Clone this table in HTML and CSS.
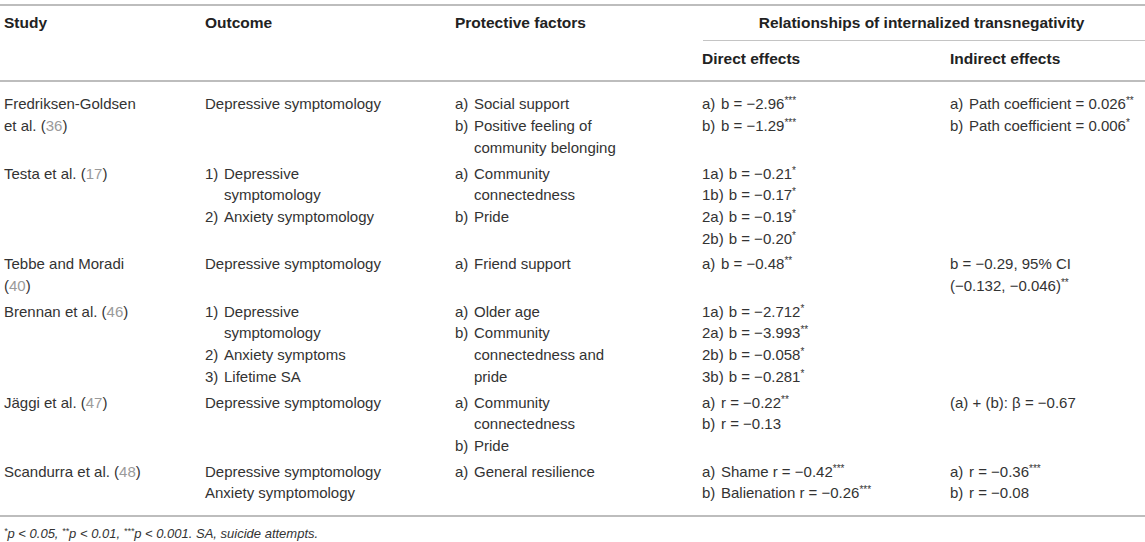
FILE: index.html
```html
<!DOCTYPE html>
<html lang="en">
<head>
<meta charset="utf-8">
<title>Internalized transnegativity and protective factors</title>
<link rel="stylesheet" href="styles.css">
</head>
<body>
<table class="tbl">
  <colgroup>
    <col class="c1"><col class="c2"><col class="c3"><col class="c4"><col class="c5">
  </colgroup>
  <thead>
    <tr class="h1">
      <th rowspan="2" class="tall">Study</th>
      <th rowspan="2" class="tall">Outcome</th>
      <th rowspan="2" class="tall">Protective factors</th>
      <th colspan="2" class="group"><div class="group-title">Relationships of internalized transnegativity</div></th>
    </tr>
    <tr class="h2">
      <th>Direct effects</th>
      <th>Indirect effects</th>
    </tr>
  </thead>
  <tbody>
    <tr class="first">
      <td class="k1">Fredriksen-Goldsen et al. (<span class="ref">36</span>)</td>
      <td class="k2">Depressive symptomology</td>
      <td class="k3">
        <div class="li"><span class="lb">a)</span><span>Social support</span></div>
        <div class="li"><span class="lb">b)</span><span>Positive feeling of community belonging</span></div>
      </td>
      <td class="k4">
        <div class="li"><span class="lb">a)</span><span>b = −2.96<sup>***</sup></span></div>
        <div class="li"><span class="lb">b)</span><span>b = −1.29<sup>***</sup></span></div>
      </td>
      <td class="k5">
        <div class="li"><span class="lb">a)</span><span>Path coefficient = 0.026<sup>**</sup></span></div>
        <div class="li"><span class="lb">b)</span><span>Path coefficient = 0.006<sup>*</sup></span></div>
      </td>
    </tr>
    <tr>
      <td class="k1">Testa et al. (<span class="ref">17</span>)</td>
      <td class="k2">
        <div class="li"><span class="lb">1)</span><span>Depressive symptomology</span></div>
        <div class="li"><span class="lb">2)</span><span>Anxiety symptomology</span></div>
      </td>
      <td class="k3">
        <div class="li"><span class="lb">a)</span><span>Community connectedness</span></div>
        <div class="li"><span class="lb">b)</span><span>Pride</span></div>
      </td>
      <td class="k4">
        <div class="li"><span class="lb">1a)</span><span>b = −0.21<sup>*</sup></span></div>
        <div class="li"><span class="lb">1b)</span><span>b = −0.17<sup>*</sup></span></div>
        <div class="li"><span class="lb">2a)</span><span>b = −0.19<sup>*</sup></span></div>
        <div class="li"><span class="lb">2b)</span><span>b = −0.20<sup>*</sup></span></div>
      </td>
      <td class="k5"></td>
    </tr>
    <tr>
      <td class="k1">Tebbe and Moradi (<span class="ref">40</span>)</td>
      <td class="k2">Depressive symptomology</td>
      <td class="k3">
        <div class="li"><span class="lb">a)</span><span>Friend support</span></div>
      </td>
      <td class="k4">
        <div class="li"><span class="lb">a)</span><span>b = −0.48<sup>**</sup></span></div>
      </td>
      <td class="k5">b = −0.29, 95% CI <span class="nw">(−0.132, −0.046)<sup>**</sup></span></td>
    </tr>
    <tr>
      <td class="k1">Brennan et al. (<span class="ref">46</span>)</td>
      <td class="k2">
        <div class="li"><span class="lb">1)</span><span>Depressive symptomology</span></div>
        <div class="li"><span class="lb">2)</span><span>Anxiety symptoms</span></div>
        <div class="li"><span class="lb">3)</span><span>Lifetime SA</span></div>
      </td>
      <td class="k3">
        <div class="li"><span class="lb">a)</span><span>Older age</span></div>
        <div class="li"><span class="lb">b)</span><span>Community connectedness and pride</span></div>
      </td>
      <td class="k4">
        <div class="li"><span class="lb">1a)</span><span>b = −2.712<sup>*</sup></span></div>
        <div class="li"><span class="lb">2a)</span><span>b = −3.993<sup>**</sup></span></div>
        <div class="li"><span class="lb">2b)</span><span>b = −0.058<sup>*</sup></span></div>
        <div class="li"><span class="lb">3b)</span><span>b = −0.281<sup>*</sup></span></div>
      </td>
      <td class="k5"></td>
    </tr>
    <tr>
      <td class="k1">Jäggi et al. (<span class="ref">47</span>)</td>
      <td class="k2">Depressive symptomology</td>
      <td class="k3">
        <div class="li"><span class="lb">a)</span><span>Community connectedness</span></div>
        <div class="li"><span class="lb">b)</span><span>Pride</span></div>
      </td>
      <td class="k4">
        <div class="li"><span class="lb">a)</span><span>r = −0.22<sup>**</sup></span></div>
        <div class="li"><span class="lb">b)</span><span>r = −0.13</span></div>
      </td>
      <td class="k5">(a) + (b): β = −0.67</td>
    </tr>
    <tr class="last">
      <td class="k1">Scandurra et al. (<span class="ref">48</span>)</td>
      <td class="k2">
        <div>Depressive symptomology</div>
        <div>Anxiety symptomology</div>
      </td>
      <td class="k3">
        <div class="li"><span class="lb">a)</span><span>General resilience</span></div>
      </td>
      <td class="k4">
        <div class="li"><span class="lb">a)</span><span>Shame r = −0.42<sup>***</sup></span></div>
        <div class="li"><span class="lb">b)</span><span>Balienation r = −0.26<sup>***</sup></span></div>
      </td>
      <td class="k5">
        <div class="li"><span class="lb">a)</span><span>r = −0.36<sup>***</sup></span></div>
        <div class="li"><span class="lb">b)</span><span>r = −0.08</span></div>
      </td>
    </tr>
  </tbody>
</table>
<p class="note"><sup>*</sup>p &lt; 0.05, <sup>**</sup>p &lt; 0.01, <sup>***</sup>p &lt; 0.001. SA, suicide attempts.</p>
</body>
</html>
```

FILE: styles.css
```css
html, body {
  margin: 0;
  padding: 0;
  background: #ffffff;
}

body {
  font-family: "Liberation Sans", Arial, Helvetica, sans-serif;
  font-size: 15px;
  line-height: 21.7px;
  color: #333333;
}

.tbl {
  width: 1145px;
  margin-top: 4px;
  border-collapse: collapse;
  table-layout: fixed;
  border-top: 2px solid #bdbdbd;
  border-bottom: 2px solid #bdbdbd;
}

.c1 { width: 201px; }
.c2 { width: 250px; }
.c3 { width: 247px; }
.c4 { width: 248px; }
.c5 { width: 199px; }

th, td {
  text-align: left;
  vertical-align: top;
  padding: 2px 4px;
}

th {
  font-weight: bold;
  font-size: 15.5px;
  color: #222222;
}

.h1 th.tall {
  padding-top: 6px;
}

.h1 th.group {
  padding: 6px 0 0 5px;
}

.group-title {
  text-align: center;
  padding: 0 5px 6px 0;
  border-bottom: 1px solid #c4c4c4;
}

.h2 th {
  padding-top: 7px;
  padding-bottom: 11px;
}

thead {
  border-bottom: 2px solid #bdbdbd;
}

/* content widths so text wraps like the reference */
td.k1 { padding-right: 52px; }
td.k2 { padding-right: 61px; }
td.k3 { padding-right: 68px; }
td.k4 { padding-right: 20px; }
td.k5 { padding-right: 5px; }

tr.first td {
  padding-top: 11px;
}

tr.last td {
  padding-bottom: 11px;
}

.li {
  display: flex;
}

.lb {
  flex: none;
  min-width: 14px;
  margin-right: 5px;
}

.nw {
  white-space: nowrap;
}

.ref {
  color: #9a9a9a;
}

sup {
  font-size: 10px;
  line-height: 0;
  vertical-align: 5px;
}

.note {
  margin: 9px 0 0 4px;
  font-size: 13px;
  line-height: 16px;
  font-style: italic;
  color: #333333;
}

.note sup {
  font-size: 9px;
  vertical-align: 4px;
}
```
